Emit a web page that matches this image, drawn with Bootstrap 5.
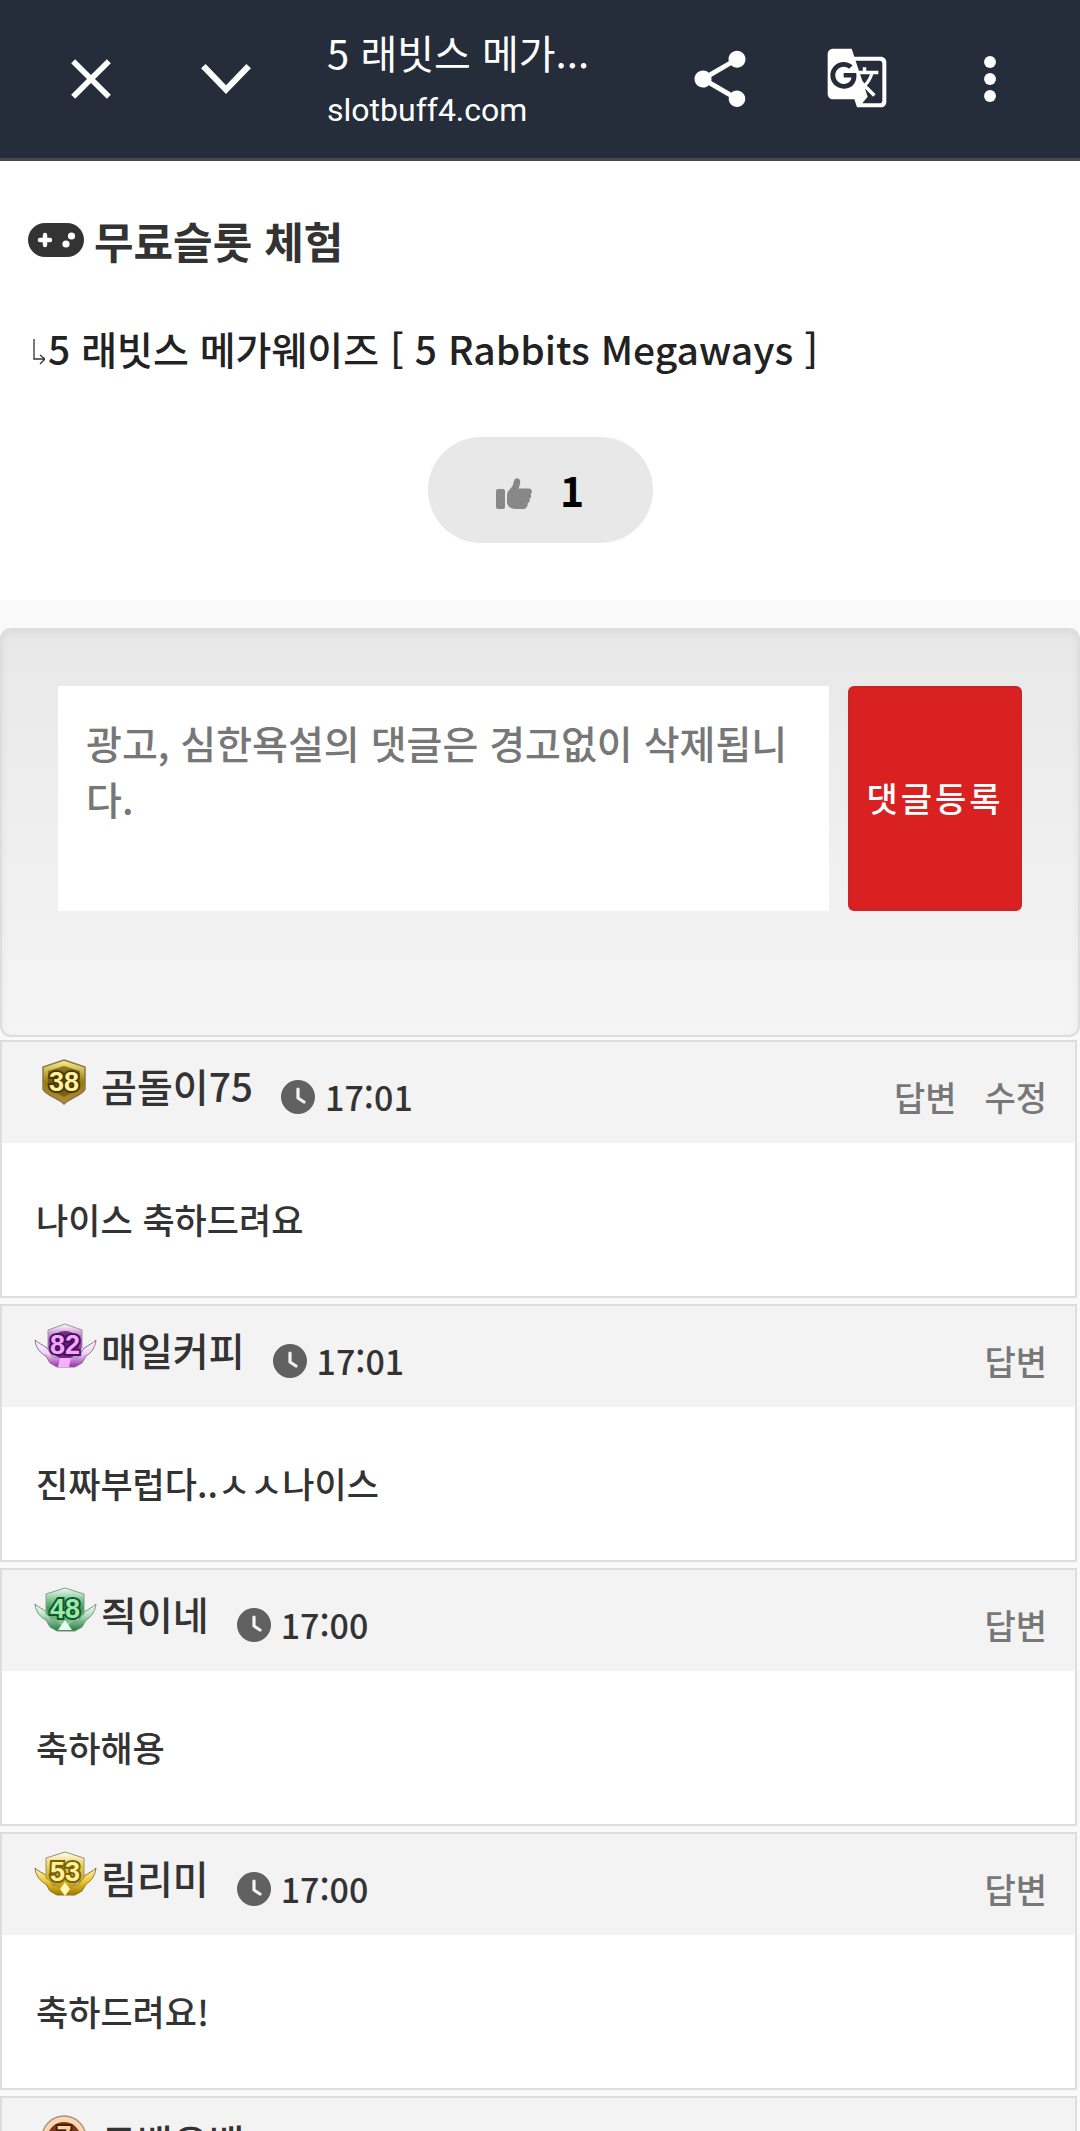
<!DOCTYPE html>
<html lang="ko">
<head>
<meta charset="utf-8">
<meta name="viewport" content="width=device-width, initial-scale=1">
<title>5 래빗스 메가웨이즈</title>
<link href="https://cdn.jsdelivr.net/npm/bootstrap@5.3.0/dist/css/bootstrap.min.css" rel="stylesheet">
<style>
body{font-family:"Noto Sans CJK KR",sans-serif;font-weight:500;background:#f9f9f9;color:#333;line-height:1.5}
.topbar{background:#252d3a;height:161px;border-bottom:3px solid #4a4751;padding:0 23px;color:#fff}
.tool{width:135px;height:100%;padding:0;border:0;background:none;color:#fff}
.tool svg{width:68px;height:68px;fill:currentColor}
.tool svg.translate-icon{width:64px;height:64px;margin:-3px 0 0 5px}
.page-name{padding:8px 0 0 34px;font-weight:400;min-width:0}
.page-name .ttl{font-size:40px;line-height:54px}
.page-name .host{font-family:Roboto,sans-serif;font-size:32px;line-height:62px}
.intro{padding:46px 28px 57px}
.intro h1{font-size:43px;line-height:66px;font-weight:700;gap:10px}
.intro h2{font-size:39px;line-height:60px;font-weight:500;color:#222;margin:45px 0 59px}
.pad-icon{width:56px;height:34px}
.turn-icon{width:12px;height:26px;margin:8px 3px 0 5px}
.like{width:225px;height:106px;border:0;border-radius:53px;background:#e8e8e8;color:#000;font-size:41px;font-weight:700;gap:28px}
.like svg{width:36px;height:32px;margin-top:8px}
.write{margin-top:28px;padding:56px 56px 124px;border:2px solid #ddd;border-radius:11px;background:linear-gradient(#e8e8e8,#f5f5f5);box-shadow:inset 0 3px 9px rgba(0,0,0,.06);gap:19px}
.write textarea{height:225px;padding:28px;border:0;border-radius:0;background:#fff;font-size:39px;line-height:56px;resize:none;font-weight:500;color:#333}
.write textarea::placeholder{color:#777;opacity:1}
.write .send{width:174px;border:2px solid #cb2427;border-radius:6px;background:#da2121;color:#fff;font-size:34px;letter-spacing:3px;padding:0 0 2px;font-weight:500}
.replies{padding:3px 3px 0 0;gap:6px}
.reply{border:2px solid #ddd;background:#fff}
.reply header{height:101px;background:#f3f3f3;padding:0 28px 0 31px}
.rank{width:64px;height:48px;margin:16px 4px 0 0;align-self:flex-start}
.rank text{font:700 27px "Liberation Sans",sans-serif;text-anchor:middle;paint-order:stroke;stroke-width:4px}
.nick{font-size:39px;line-height:58px;margin-bottom:16px}
.time{font-size:34px;line-height:50px;gap:10px;margin:9px 0 0 28px}
.time svg{width:34px;height:34px}
.acts{gap:28px;font-size:34px;line-height:50px;margin-top:9px}
.acts a{color:#777;text-decoration:none}
.reply p{margin:0;padding:50px 34px 52px;font-size:35px;line-height:51px}
</style>
<script src="https://cdn.jsdelivr.net/npm/bootstrap@5.3.0/dist/js/bootstrap.bundle.min.js"></script>
</head>
<body class="vh-100 overflow-hidden">
<svg width="0" height="0" class="position-absolute" aria-hidden="true">
<defs>
<linearGradient id="gold" x2="0" y2="1"><stop stop-color="#fff08a"/><stop offset=".5" stop-color="#9a7a10"/><stop offset="1" stop-color="#b08a3c"/></linearGradient>
<linearGradient id="purple" x2="0" y2="1"><stop stop-color="#fff"/><stop offset=".5" stop-color="#a030b0"/><stop offset="1" stop-color="#e070f0"/></linearGradient>
<linearGradient id="green" x2="0" y2="1"><stop stop-color="#eafff0"/><stop offset=".5" stop-color="#3d9c5a"/><stop offset="1" stop-color="#90d8a4"/></linearGradient>
<linearGradient id="yellow" x2="0" y2="1"><stop stop-color="#fff"/><stop offset=".35" stop-color="#e8cf50"/><stop offset="1" stop-color="#b89000"/></linearGradient>
<linearGradient id="wingp" x2="0" y2="1"><stop stop-color="#fff"/><stop offset=".5" stop-color="#f0d0f8"/><stop offset="1" stop-color="#9828b0"/></linearGradient>
<linearGradient id="wingg" x2="0" y2="1"><stop stop-color="#fff"/><stop offset=".4" stop-color="#b4e4c0"/><stop offset="1" stop-color="#1f7a3c"/></linearGradient>
<linearGradient id="wingy" x2="0" y2="1"><stop stop-color="#fff4c0"/><stop offset=".5" stop-color="#f0c828"/><stop offset="1" stop-color="#a07800"/></linearGradient>
<symbol id="clock" viewBox="0 0 34 34"><circle cx="17" cy="17" r="17" fill="#616161"/><path d="M17 9v9l6 4" fill="none" stroke="#f3f3f3" stroke-width="3.2" stroke-linecap="round"/></symbol>
<symbol id="wings" viewBox="0 0 64 48"><path d="M2 18c3 3 8 5 12 8l6 9h25l6-9c5-3 9-5 12-8-1 8-5 13-10 16l-4 7-7 4H24l-7-4-4-7C7 31 3 26 2 18z"/></symbol>
</defs>
</svg>

<nav class="topbar d-flex align-items-center">
  <button class="tool" aria-label="닫기"><svg viewBox="0 0 24 24"><path d="M19 6.41 17.59 5 12 10.59 6.41 5 5 6.41 10.59 12 5 17.59 6.41 19 12 13.41 17.59 19 19 17.59 13.41 12z"/></svg></button>
  <button class="tool" aria-label="접기"><svg viewBox="0 0 24 24"><path d="M3.2 8.2 4.8 6.7 12 14.2l7.2-7.5 1.6 1.5L12 17.3z"/></svg></button>
  <div class="page-name flex-grow-1">
    <div class="ttl text-nowrap">5 래빗스 메가...</div>
    <div class="host">slotbuff4.com</div>
  </div>
  <button class="tool" aria-label="공유"><svg viewBox="0 0 24 24"><path d="M18 16.08c-.76 0-1.44.3-1.96.77L8.91 12.7c.05-.23.09-.46.09-.7s-.04-.47-.09-.7l7.05-4.11c.54.5 1.25.81 2.04.81 1.66 0 3-1.34 3-3s-1.34-3-3-3-3 1.34-3 3c0 .24.04.47.09.7L8.04 9.81C7.5 9.31 6.79 9 6 9c-1.66 0-3 1.34-3 3s1.34 3 3 3c.79 0 1.5-.31 2.04-.81l7.12 4.16c-.05.21-.08.43-.08.65 0 1.61 1.31 2.92 2.92 2.92s2.92-1.31 2.92-2.92-1.31-2.92-2.92-2.92z"/></svg></button>
  <button class="tool" aria-label="번역"><svg class="translate-icon" viewBox="0 0 24 24"><path d="M21 4H11l-1-3H3c-1.1 0-2 .9-2 2v15c0 1.1.9 2 2 2h8l1 3h9c1.1 0 2-.9 2-2V6c0-1.1-.9-2-2-2zM7 16c-2.76 0-5-2.24-5-5s2.24-5 5-5c1.35 0 2.48.5 3.35 1.3L9.03 8.57c-.38-.36-1.04-.78-2.03-.78-1.74 0-3.15 1.44-3.15 3.21S5.26 14.21 7 14.21c2.01 0 2.84-1.44 2.92-2.41H7v-1.71h4.68c.07.31.12.61.12 1.02C11.8 13.97 9.89 16 7 16zm6.17-5.42h3.7c-.43 1.25-1.11 2.43-2.05 3.47-.31-.35-.6-.72-.86-1.1l-.79-2.37zm8.33 9.92c0 .55-.45 1-1 1H14l2-2.5-1.04-3.1 3.1 3.1.92-.92-3.3-3.25.02-.02c1.13-1.25 1.93-2.69 2.4-4.22H20v-1.3h-4.53V8h-1.29v1.29h-1.44L11.46 5.5h9.04c.55 0 1 .45 1 1v14z"/></svg></button>
  <button class="tool" aria-label="더보기"><svg viewBox="0 0 24 24"><circle cx="12" cy="6" r="2.1"/><circle cx="12" cy="12" r="2.1"/><circle cx="12" cy="18" r="2.1"/></svg></button>
</nav>

<main>
  <section class="intro bg-white">
    <h1 class="d-flex align-items-center m-0"><svg class="pad-icon" viewBox="0 0 56 34"><rect width="56" height="34" rx="17" fill="#333"/><path d="M17 12v10M12 17h10" stroke="#fff" stroke-width="4.4" stroke-linecap="round"/><circle cx="43.500" cy="13" r="3.600" fill="#fff"/><circle cx="38" cy="21" r="3.600" fill="#fff"/></svg>무료슬롯 체험</h1>
    <h2 class="d-flex align-items-center"><svg class="turn-icon" viewBox="0 0 12 26" fill="none" stroke="#333" stroke-width="1.300"><path d="M1 0v20h11M7 16l5 4-5 5"/></svg>5 래빗스 메가웨이즈 [ 5 Rabbits Megaways ]</h2>
    <button class="like d-flex align-items-center justify-content-center mx-auto" aria-label="추천 1"><svg viewBox="0 0 36 32" fill="#888"><rect y="11" width="9" height="20" rx="2"/><path d="M11 17c0-3 2-5 4-7s2-4 3-7c.6-2.500 3-3.500 5-2 2 1.600 1.500 5-.5 9.500H33c3 0 4 4 1.500 5.500 1.500 2 .5 4-1 4.800.8 2-.2 3.800-1.800 4.200.3 3.500-1.700 6-4.700 6h-7c-5.500 0-9-3-9-7z"/></svg>1</button>
  </section>

  <form class="write d-flex">
    <textarea class="form-control flex-fill" aria-label="댓글" placeholder="광고, 심한욕설의 댓글은 경고없이 삭제됩니다."></textarea>
    <button type="button" class="send flex-shrink-0">댓글등록</button>
  </form>

  <section class="replies d-flex flex-column">
    <article class="reply">
      <header class="d-flex align-items-center">
        <svg class="rank" viewBox="0 0 64 48"><path d="M31 2 52 9v22c-2 6-15 9-21 15-6-6-19-9-21-15V9z" fill="url(#gold)" stroke="#8b7a48" stroke-width="1.500"/><path d="M31 8 47 13v17L31 39 15 30V13z" fill="#6b5208" opacity=".7"/><text x="31" y="33" fill="#fff3a0" stroke="#4a3804">38</text></svg>
        <span class="nick">곰돌이75</span>
        <span class="time d-flex align-items-center"><svg><use href="#clock"/></svg>17:01</span>
        <div class="acts d-flex ms-auto"><a href="#">답변</a><a href="#">수정</a></div>
      </header>
      <p>나이스 축하드려요</p>
    </article>
    <article class="reply">
      <header class="d-flex align-items-center">
        <svg class="rank" viewBox="0 0 64 48"><use href="#wings" fill="url(#wingp)" stroke="#8a7090"/><path d="M32 2 49 8v18L32 40 15 26V8z" fill="url(#purple)" stroke="#999"/><circle cx="32" cy="23" r="14" fill="#5c1470" opacity=".8"/><text x="32" y="32" fill="#f3a8ff" stroke="#48105a">82</text><path d="m27 36h11l-2 9H25z" fill="#f6b0ff"/></svg>
        <span class="nick">매일커피</span>
        <span class="time d-flex align-items-center"><svg><use href="#clock"/></svg>17:01</span>
        <div class="acts d-flex ms-auto"><a href="#">답변</a></div>
      </header>
      <p>진짜부럽다..ㅅㅅ나이스</p>
    </article>
    <article class="reply">
      <header class="d-flex align-items-center">
        <svg class="rank" viewBox="0 0 64 48"><use href="#wings" fill="url(#wingg)" stroke="#7a907e"/><path d="M32 2 51 8v20L32 42 13 28V8z" fill="url(#green)" stroke="#8a9a8c"/><text x="32" y="32" fill="#9be8ad" stroke="#14562a">48</text><path d="m32 34 7 10H25z" fill="#e8fff0"/></svg>
        <span class="nick">즥이네</span>
        <span class="time d-flex align-items-center"><svg><use href="#clock"/></svg>17:00</span>
        <div class="acts d-flex ms-auto"><a href="#">답변</a></div>
      </header>
      <p>축하해용</p>
    </article>
    <article class="reply">
      <header class="d-flex align-items-center">
        <svg class="rank" viewBox="0 0 64 48"><use href="#wings" fill="url(#wingy)" stroke="#8a7430"/><path d="M32 2 51 8v20L32 42 13 28V8z" fill="url(#yellow)" stroke="#999070"/><text x="32" y="31" fill="#fff0a0" stroke="#7a6000">53</text><path d="m32 32 5 7-5 7-5-7z" fill="#fff6b0"/></svg>
        <span class="nick">림리미</span>
        <span class="time d-flex align-items-center"><svg><use href="#clock"/></svg>17:00</span>
        <div class="acts d-flex ms-auto"><a href="#">답변</a></div>
      </header>
      <p>축하드려요!</p>
    </article>
    <article class="reply">
      <header class="d-flex align-items-center">
        <svg class="rank" viewBox="0 0 64 48"><circle cx="31" cy="24" r="22" fill="#ffd6b4" stroke="#a09484" stroke-width="1.500"/><circle cx="31" cy="25" r="17" fill="#7a3c18"/><text x="31" y="31" fill="#ffd0a0" stroke="#4a2008">7</text></svg>
        <span class="nick">두백우백</span>
      </header>
    </article>
  </section>
</main>
</body>
</html>
